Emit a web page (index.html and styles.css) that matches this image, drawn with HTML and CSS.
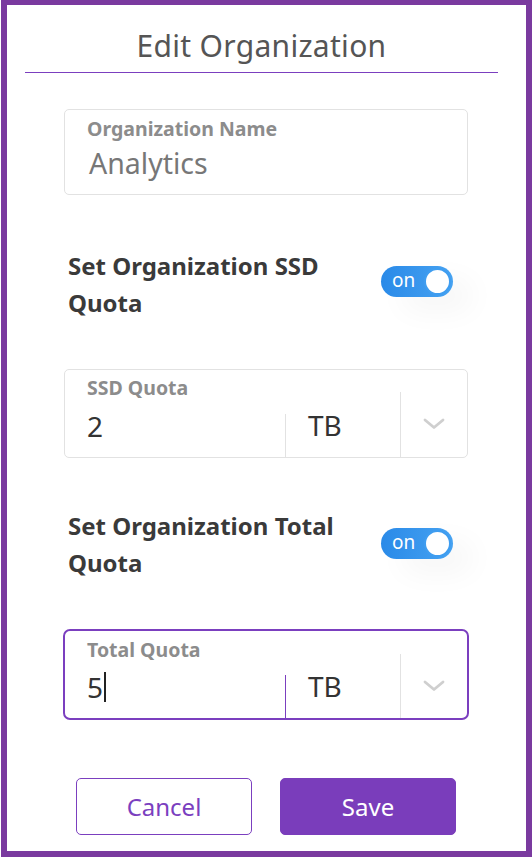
FILE: index.html
```html
<!DOCTYPE html>
<html>
<head>
<meta charset="utf-8">
<link rel="stylesheet" href="styles.css">
</head>
<body>
<div class="frame">
  <h1 class="title">Edit Organization</h1>
  <div class="form">
    <div class="field">
      <div class="label">Organization Name</div>
      <div class="value muted">Analytics</div>
    </div>

    <div class="toggle-row">
      <div class="toggle-text">Set Organization SSD Quota</div>
      <div class="toggle"><span class="toggle-on">on</span><span class="knob"></span></div>
    </div>

    <div class="quota">
      <div class="q-main">
        <div class="label">SSD Quota</div>
        <div class="value">2</div>
      </div>
      <div class="q-unit">TB</div>
      <div class="q-arrow">
        <svg width="22" height="12" viewBox="0 0 22 12"><path d="M2 2 L11 9.5 L20 2" fill="none" stroke="#cfcfcf" stroke-width="2.8" stroke-linecap="round" stroke-linejoin="round"/></svg>
      </div>
    </div>

    <div class="toggle-row second">
      <div class="toggle-text">Set Organization Total Quota</div>
      <div class="toggle"><span class="toggle-on">on</span><span class="knob"></span></div>
    </div>

    <div class="quota focused">
      <div class="q-main">
        <div class="label">Total Quota</div>
        <div class="value">5<span class="caret"></span></div>
      </div>
      <div class="q-unit">TB</div>
      <div class="q-arrow">
        <svg width="22" height="12" viewBox="0 0 22 12"><path d="M2 2 L11 9.5 L20 2" fill="none" stroke="#cfcfcf" stroke-width="2.8" stroke-linecap="round" stroke-linejoin="round"/></svg>
      </div>
    </div>

    <div class="actions">
      <button class="btn btn-outline">Cancel</button>
      <button class="btn btn-fill">Save</button>
    </div>
  </div>
</div>
</body>
</html>
```

FILE: styles.css
```css
* { box-sizing: border-box; }
html, body { margin: 0; padding: 0; background: #fff; }
body { font-family: "Noto Sans", "Open Sans", sans-serif; }

.frame {
  width: 531px;
  height: 857px;
  margin-left: 1px;
  border: 6px solid #7a3a9f;
  border-top-width: 5px;
  padding: 0 28px 0 18px;
}

.title {
  margin: 0;
  padding-top: 22px;
  height: 68px;
  border-bottom: 1px solid #7b3fbf;
  text-align: center;
  font-weight: 400;
  font-size: 30px;
  line-height: 38px;
  color: #555;
  letter-spacing: 0.3px;
}

.form {
  width: 404px;
  margin: 36px 0 0 39px;
}

.field {
  height: 86px;
  border: 1px solid #e2e2e2;
  border-radius: 5px;
  padding: 6px 22px 0 22px;
}

.label {
  font-size: 19.5px;
  font-weight: 700;
  color: #8c8c8c;
  line-height: 26px;
}

.value {
  font-size: 28px;
  line-height: 36px;
  color: #333;
  margin-top: 3px;
  display: flex;
  align-items: center;
}
.value.muted { color: #777; padding-left: 2px; font-size: 28.5px; }

.toggle-row {
  display: flex;
  align-items: flex-start;
  justify-content: space-between;
  margin-top: 52px;
  padding-left: 4px;
  padding-right: 15px;
}
.toggle-row.second { margin-top: 49px; }

.toggle-text {
  width: 290px;
  font-size: 24px;
  font-weight: 700;
  color: #3a3a3a;
  line-height: 37px;
}

.toggle {
  margin-top: 19px;
  width: 72px;
  height: 31px;
  border-radius: 16px;
  background: linear-gradient(90deg, #2a8ae8 0%, #46a2f1 100%);
  display: flex;
  align-items: center;
  justify-content: space-between;
  padding: 0 2px 0 11px;
  box-shadow: 20px 14px 30px rgba(0,0,0,0.04);
}
.second .toggle { margin-top: 21px; }
.toggle-on {
  color: #fff;
  font-size: 19px;
  line-height: 20px;
  margin-top: -3px;
}
.knob {
  width: 27px;
  height: 27px;
  border-radius: 50%;
  background: #fff;
  border: 2px solid #3f9df0;
}

.quota {
  margin-top: 48px;
  height: 89px;
  border: 1px solid #e2e2e2;
  border-radius: 5px;
  display: flex;
}
.quota.focused {
  margin-top: 48px;
  height: 91px;
  width: 406px;
  margin-left: -1px;
  border: 2px solid #7b3fbf;
  border-radius: 7px;
}

.q-main {
  width: 220px;
  padding: 5px 0 0 22px;
}
.q-main .value { margin-top: 7px; height: 36px; }

.q-unit {
  width: 115px;
  margin-top: 44px;
  border-left: 1px solid #e2e2e2;
  padding-left: 22px;
  font-size: 28px;
  line-height: 22px;
  color: #333;
  display: flex;
  align-items: flex-start;
}

.q-arrow {
  flex: 1;
  margin-top: 22px;
  border-left: 1px solid #e2e2e2;
  display: flex;
  justify-content: center;
  padding-top: 26px;
  padding-right: 1px;
}

.focused .q-main { padding-left: 22px; padding-top: 6px; }
.focused .q-main .value { margin-top: 6px; }
.focused .q-unit { margin-top: 44px; border-left-color: #7b3fbf; }
.focused .q-arrow { margin-top: 23px; }

.caret {
  display: inline-block;
  width: 1.5px;
  height: 30px;
  background: #222;
  margin-left: 1px;
}

.actions {
  display: flex;
  gap: 28px;
  margin-top: 58px;
  padding-left: 12px;
}
.btn {
  width: 176px;
  height: 57px;
  border-radius: 5px;
  font-family: inherit;
  font-size: 24px;
  cursor: pointer;
}
.btn-outline {
  background: #fff;
  border: 1px solid #7b3fbf;
  color: #7b3fbf;
}
.btn-fill {
  background: #7a3dbb;
  border: 1px solid #7a3dbb;
  color: #fff;
}
```
